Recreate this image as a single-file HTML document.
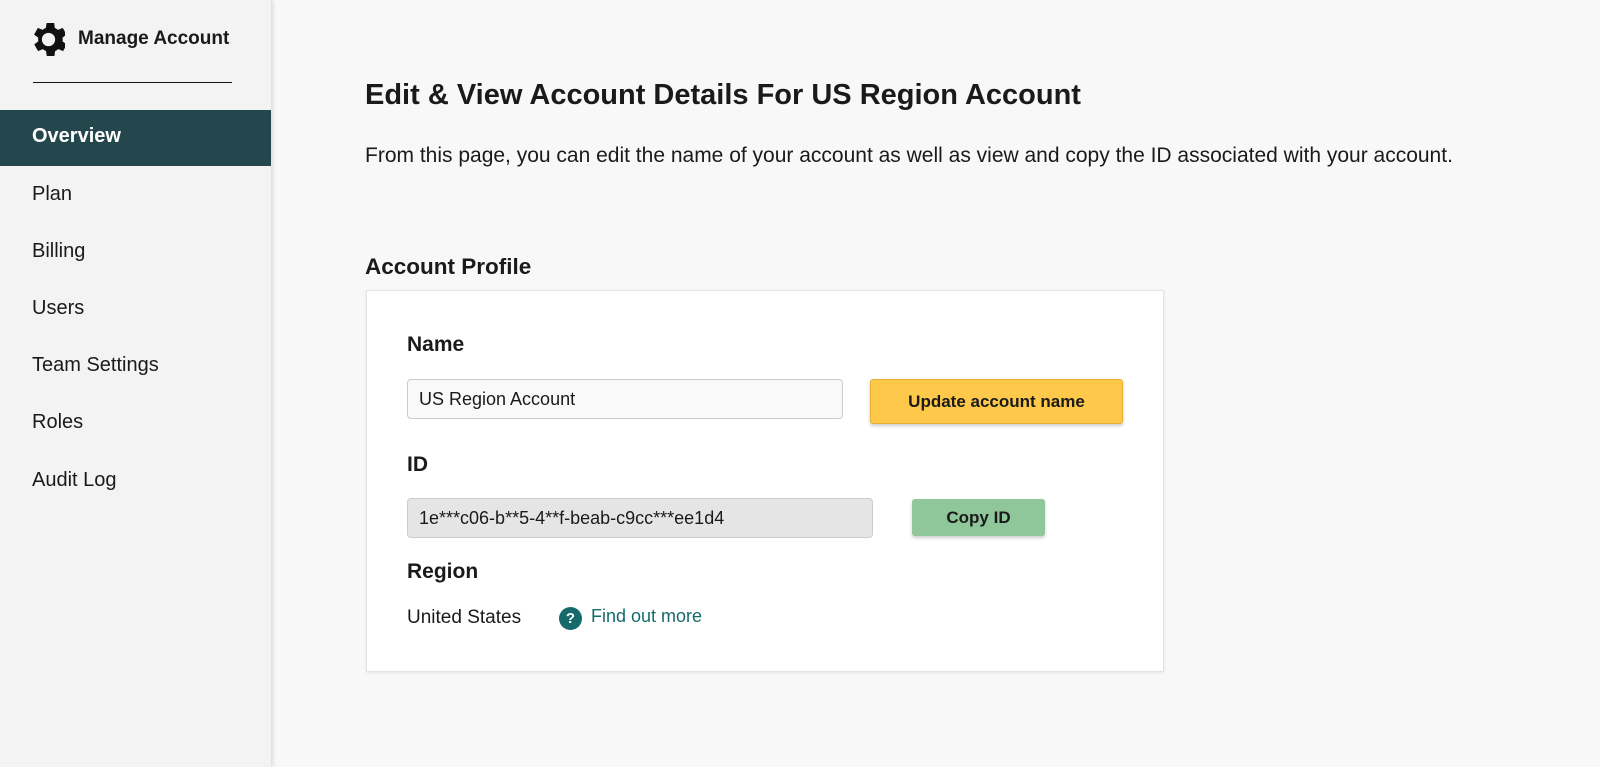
<!DOCTYPE html>
<html><head><style>
body{margin:0;width:1600px;height:767px;background:#f8f8f8;font-family:"Liberation Sans",sans-serif;color:#1a1a1a;position:relative;overflow:hidden}
.sb{position:absolute;left:0;top:0;width:271px;height:767px;background:#f3f3f3;box-shadow:2px 0 4px rgba(0,0,0,.12)}
.abs{position:absolute;white-space:nowrap}
.nav{position:absolute;left:32px;font-size:20px}
.card{position:absolute;left:366px;top:290px;width:796px;height:380px;background:#fff;border:1px solid #e4e4e4;box-shadow:0 1px 3px rgba(0,0,0,.08)}
.lbl{position:absolute;left:40px;font-size:21px;font-weight:bold}
.inp{position:absolute;border:1px solid #ccc;border-radius:4px;font-size:18px;padding-left:11px;box-sizing:border-box;display:flex;align-items:center}
.btn{position:absolute;border-radius:3px;font-weight:bold;font-size:17px;display:flex;align-items:center;justify-content:center;box-shadow:0 2px 3px rgba(0,0,0,.2)}
</style></head><body>
<div class="sb">
<svg class="abs" style="left:32px;top:23px" width="33" height="33" viewBox="3.3 3.3 17.4 17.4"><path fill="#111" d="M19.4 13a7.5 7.5 0 0 0 0-2l2.1-1.6-2-3.5-2.5 1a7 7 0 0 0-1.7-1L15 3.3h-4l-.4 2.6a7 7 0 0 0-1.7 1l-2.5-1-2 3.5L6.6 11a7.5 7.5 0 0 0 0 2l-2.1 1.6 2 3.5 2.5-1a7 7 0 0 0 1.7 1l.4 2.6h4l.4-2.6a7 7 0 0 0 1.7-1l2.5 1 2-3.5zM12 15.5a3.5 3.5 0 1 1 0-7 3.5 3.5 0 0 1 0 7z"/></svg>
<div class="abs" style="left:78px;top:28px;font-size:19px;font-weight:bold">Manage Account</div>
<div class="abs" style="left:33px;top:82px;width:199px;height:1px;background:#111"></div>
<div class="abs" style="left:0;top:110px;width:271px;height:56px;background:#23474c"></div>
<div class="nav" style="top:125px;color:#fff;font-weight:bold">Overview</div>
<div class="nav" style="top:183px">Plan</div>
<div class="nav" style="top:240px">Billing</div>
<div class="nav" style="top:297px">Users</div>
<div class="nav" style="top:354px">Team Settings</div>
<div class="nav" style="top:411px">Roles</div>
<div class="nav" style="top:469px">Audit Log</div>
</div>
<div class="abs" style="left:365px;top:79px;font-size:29px;font-weight:bold">Edit &amp; View Account Details For US Region Account</div>
<div class="abs" style="left:365px;top:144px;font-size:21px">From this page, you can edit the name of your account as well as view and copy the ID associated with your account.</div>
<div class="abs" style="left:365px;top:254px;font-size:22.5px;font-weight:bold">Account Profile</div>
<div class="card">
<div class="lbl" style="top:42px">Name</div>
<div class="inp" style="left:40px;top:88px;width:436px;height:40px;background:#f9f9f9">US Region Account</div>
<div class="btn" style="left:503px;top:88px;width:253px;height:45px;background:#fec84a;border:1px solid #e8b030;box-sizing:border-box">Update account name</div>
<div class="lbl" style="top:162px">ID</div>
<div class="inp" style="left:40px;top:207px;width:466px;height:40px;background:#e5e5e5">1e***c06-b**5-4**f-beab-c9cc***ee1d4</div>
<div class="btn" style="left:545px;top:208px;width:133px;height:37px;background:#8fc69a">Copy ID</div>
<div class="lbl" style="top:269px">Region</div>
<div class="abs" style="left:40px;top:316px;font-size:19px">United States</div>
<div class="abs" style="left:192px;top:316px;width:23px;height:23px;border-radius:50%;background:#176a6c;color:#fff;font-weight:bold;font-size:15px;text-align:center;line-height:23px">?</div>
<div class="abs" style="left:224px;top:315px;font-size:18px;color:#176a6c">Find out more</div>
</div>
</body></html>
